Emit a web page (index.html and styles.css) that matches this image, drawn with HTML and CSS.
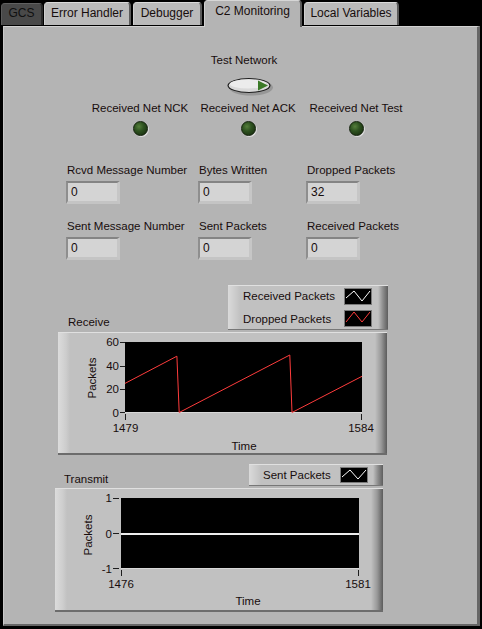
FILE: index.html
```html
<!DOCTYPE html>
<html>
<head>
<meta charset="utf-8">
<title>C2 Monitoring</title>
<link rel="stylesheet" href="styles.css">
</head>
<body>
<div class="tabs">
  <div class="tab tab-dark tab-gcs">GCS</div>
  <div class="tab tab-err">Error Handler</div>
  <div class="tab tab-dbg">Debugger</div>
  <div class="tab tab-active tab-c2">C2 Monitoring</div>
  <div class="tab tab-loc">Local Variables</div>
</div>
<div class="panel">
  <div class="test-net">
    <div class="label">Test Network</div>
    <svg class="toggle" width="48" height="20" viewBox="0 0 48 20">
      <ellipse cx="24" cy="10.5" rx="22" ry="8" fill="#8a8a8a" opacity="0.7"/>
      <ellipse cx="22" cy="8.5" rx="21.5" ry="7.5" fill="#1e1e1e"/>
      <ellipse cx="22" cy="8.5" rx="20.3" ry="6.4" fill="#d9d9d9"/>
      <ellipse cx="21" cy="7" rx="18" ry="4.5" fill="#ececec"/>
      <polygon points="31,3.5 41,8.5 31,13.5" fill="#3b7a27"/>
    </svg>
  </div>
  <div class="leds">
    <div class="led-item"><div class="label">Received Net NCK</div><div class="led"></div></div>
    <div class="led-item"><div class="label">Received Net ACK</div><div class="led"></div></div>
    <div class="led-item"><div class="label">Received Net Test</div><div class="led"></div></div>
  </div>
  <div class="numerics">
    <div class="num"><div class="label">Rcvd Message Number</div><div class="numbox">0</div></div>
    <div class="num"><div class="label">Bytes Written</div><div class="numbox">0</div></div>
    <div class="num"><div class="label">Dropped Packets</div><div class="numbox">32</div></div>
    <div class="num"><div class="label">Sent Message Number</div><div class="numbox">0</div></div>
    <div class="num"><div class="label">Sent Packets</div><div class="numbox">0</div></div>
    <div class="num"><div class="label">Received Packets</div><div class="numbox">0</div></div>
  </div>

  <div class="graph graph-rx">
    <div class="graph-head">
      <div class="label graph-title">Receive</div>
      <div class="legend legend-rx">
        <div class="legend-row">
          <span>Received Packets</span>
          <svg class="swatch" width="28" height="17" viewBox="0 0 28 17"><rect x="0.5" y="0.5" width="27" height="16" fill="#000" stroke="#7a7a7a"/><polyline points="2,10 10,3 18,13 26,3" fill="none" stroke="#ffffff"/></svg>
        </div>
        <div class="legend-row">
          <span>Dropped Packets</span>
          <svg class="swatch" width="28" height="17" viewBox="0 0 28 17"><rect x="0.5" y="0.5" width="27" height="16" fill="#000" stroke="#7a7a7a"/><polyline points="2,12 10,2 18,12 26,2" fill="none" stroke="#ff3c3c"/></svg>
        </div>
      </div>
    </div>
    <div class="frame frame-rx">
      <svg class="chart" width="329" height="123" viewBox="0 0 329 123">
        <rect x="67" y="10" width="237" height="71" fill="#000"/>
        <line x1="67" y1="80.5" x2="304" y2="80.5" stroke="#d8d8d8"/>
        <polyline points="67,51.4 118.9,24.2 121.2,80.5 231.8,23 234,80.5 304,44.3" fill="none" stroke="#ff3c3c"/>
        <g stroke="#1e1e1e">
          <line x1="62" y1="10.5" x2="67" y2="10.5"/>
          <line x1="62" y1="34.5" x2="67" y2="34.5"/>
          <line x1="62" y1="57.5" x2="67" y2="57.5"/>
          <line x1="62" y1="80.5" x2="67" y2="80.5"/>
          <line x1="67.5" y1="82" x2="67.5" y2="88"/>
          <line x1="303.5" y1="82" x2="303.5" y2="88"/>
        </g>
        <text x="61" y="14" text-anchor="end">60</text>
        <text x="61" y="38" text-anchor="end">40</text>
        <text x="61" y="61" text-anchor="end">20</text>
        <text x="61" y="85" text-anchor="end">0</text>
        <text x="67.5" y="100" text-anchor="middle">1479</text>
        <text x="303" y="100" text-anchor="middle">1584</text>
        <text x="186" y="118" text-anchor="middle">Time</text>
        <text transform="translate(38,46) rotate(-90)" text-anchor="middle">Packets</text>
      </svg>
    </div>
  </div>

  <div class="graph graph-tx">
    <div class="graph-head">
      <div class="label graph-title">Transmit</div>
      <div class="legend legend-tx">
        <div class="legend-row">
          <span>Sent Packets</span>
          <svg class="swatch" width="28" height="16" viewBox="0 0 28 16"><rect x="0.5" y="0.5" width="27" height="15" fill="#000" stroke="#7a7a7a"/><polyline points="2,10 10,3 18,12 26,3" fill="none" stroke="#ffffff"/></svg>
        </div>
      </div>
    </div>
    <div class="frame frame-tx">
      <svg class="chart" width="328" height="124" viewBox="0 0 328 124">
        <rect x="66" y="10" width="238" height="71" fill="#000"/>
        <line x1="66" y1="80.5" x2="304" y2="80.5" stroke="#d8d8d8"/>
        <rect x="66" y="45" width="238" height="2" fill="#ececec"/>
        <g stroke="#1e1e1e">
          <line x1="58" y1="10.5" x2="64" y2="10.5"/>
          <line x1="58" y1="45.5" x2="64" y2="45.5"/>
          <line x1="58" y1="80.5" x2="64" y2="80.5"/>
          <line x1="66.5" y1="82" x2="66.5" y2="88"/>
          <line x1="303.5" y1="82" x2="303.5" y2="88"/>
        </g>
        <text x="57" y="14" text-anchor="end">1</text>
        <text x="57" y="49.5" text-anchor="end">0</text>
        <text x="57" y="85" text-anchor="end">-1</text>
        <text x="66" y="100" text-anchor="middle">1476</text>
        <text x="303" y="100" text-anchor="middle">1581</text>
        <text x="193" y="117" text-anchor="middle">Time</text>
        <text transform="translate(37,47) rotate(-90)" text-anchor="middle">Packets</text>
      </svg>
    </div>
  </div>
</div>
</body>
</html>
```

FILE: styles.css
```css
* {
  box-sizing: border-box;
}

html,
body {
  margin: 0;
  padding: 0;
  background: #000;
}

body {
  width: 482px;
  height: 629px;
  overflow: hidden;
  font-family: "Liberation Sans", Arial, sans-serif;
  color: #170d0d;
}

/* ---------- tabs ---------- */
.tabs {
  display: flex;
  align-items: flex-end;
  height: 26px;
  padding-left: 1px;
}

.tab {
  height: 23px;
  margin-bottom: 1px;
  margin-right: 2px;
  padding-top: 3px;
  font-size: 12px;
  line-height: 14px;
  text-align: center;
  white-space: nowrap;
  background: #bababa;
  border-top: 1px solid #dadada;
  border-left: 1px solid #d0d0d0;
  border-right: 2px solid #5a5a5a;
  border-radius: 4px 4px 0 0;
}

.tab-gcs {
  width: 42px;
  height: 22px;
  margin-right: 1px;
  padding-top: 2px;
}

.tab-err {
  width: 87px;
}

.tab-dbg {
  width: 69px;
}

.tab-c2 {
  width: 98px;
}

.tab-loc {
  width: 95px;
}

.tab-dark {
  background: #494949;
  border-top-color: #616161;
  border-left-color: #5a5a5a;
  border-right-color: #2a2a2a;
  color: #101010;
}

.tab-active {
  position: relative;
  z-index: 2;
  height: 27px;
  margin-bottom: -1px;
  background: #b4b4b4;
  border-top-color: #d6d6d6;
}

/* ---------- panel ---------- */
.panel {
  margin-left: 3px;
  width: 477px;
  height: 600px;
  background: #b4b4b4;
  border-top: 1px solid #d2d2d2;
  border-left: 1px solid #c8c8c8;
  border-right: 3px solid #666666;
  border-bottom: 2px solid #666666;
}

.label {
  font-size: 11.5px;
  line-height: 13px;
  white-space: nowrap;
}

/* test network */
.test-net {
  margin-top: 27px;
  padding-left: 7px;
  display: flex;
  flex-direction: column;
  align-items: center;
}

.toggle {
  display: block;
  margin-top: 10px;
  margin-left: 14px;
}

/* LEDs */
.leds {
  margin-top: 5px;
  margin-left: 82px;
  display: grid;
  grid-template-columns: 108px 108px 108px;
}

.led-item {
  display: flex;
  flex-direction: column;
  align-items: center;
}

.led {
  width: 15px;
  height: 15px;
  margin-top: 6px;
  border-radius: 50%;
  border: 1px solid #13220c;
  background: radial-gradient(circle at 38% 35%, #557f3c 0, #2e5220 40%, #1c3512 78%, #12240b 100%);
  box-shadow: 1px 1px 0 #dcdcdc;
}

/* numerics */
.numerics {
  margin-top: 28px;
  margin-left: 62px;
  display: grid;
  grid-template-columns: 132px 108px 108px;
  row-gap: 16px;
}

.num .label {
  padding-left: 1px;
}

.numbox {
  width: 54px;
  height: 23px;
  margin-top: 4px;
  padding-left: 3px;
  padding-top: 1px;
  font-size: 12px;
  line-height: 17px;
  background: #d4d4d4;
  border-top: 2px solid #848484;
  border-left: 2px solid #8e8e8e;
  border-right: 3px solid #c6c6c6;
  border-bottom: 3px solid #c4c4c4;
}

/* graphs */
.graph-rx {
  margin-top: 25px;
  margin-left: 54px;
  width: 329px;
}

.graph-tx {
  margin-top: 9px;
  margin-left: 51px;
  width: 328px;
}

.graph-head {
  display: flex;
  justify-content: space-between;
  align-items: flex-end;
}

.graph-rx .graph-title {
  padding-left: 10px;
  margin-bottom: 1px;
}

.graph-tx .graph-title {
  padding-left: 9px;
}

.legend {
  display: flex;
  flex-direction: column;
  font-size: 11.5px;
  background: linear-gradient(to right, #dadada 0, #c8c8c8 9px, #c1c1c1 12px, #c1c1c1 calc(100% - 10px), #8c8c8c calc(100% - 5px), #5e5e5e 100%);
  box-shadow: inset 0 1px 0 #e0e0e0, inset 0 -1px 0 #777777;
}

.legend-rx {
  width: 160px;
  height: 45px;
  margin-right: -1px;
  padding: 0 16px 0 15px;
}

.legend-tx {
  width: 134px;
  height: 22px;
  padding: 0 15px 0 14px;
}

.legend-row {
  flex: 1;
  display: flex;
  align-items: center;
  justify-content: space-between;
  white-space: nowrap;
}

.swatch {
  display: block;
}

.frame {
  margin-top: 2px;
  background: linear-gradient(to right, #dcdcdc 0, #cdcdcd 8px, #c1c1c1 12px, #c1c1c1 calc(100% - 12px), #9a9a9a calc(100% - 6px), #5c5c5c 100%);
  box-shadow: inset 0 1px 0 #e0e0e0, inset 0 -2px 0 #6c6c6c;
}

.frame-rx {
  height: 123px;
}

.frame-tx {
  height: 124px;
}

.chart {
  display: block;
}

.chart text {
  font-family: "Liberation Sans", Arial, sans-serif;
  font-size: 11.5px;
  fill: #170d0d;
}
```
